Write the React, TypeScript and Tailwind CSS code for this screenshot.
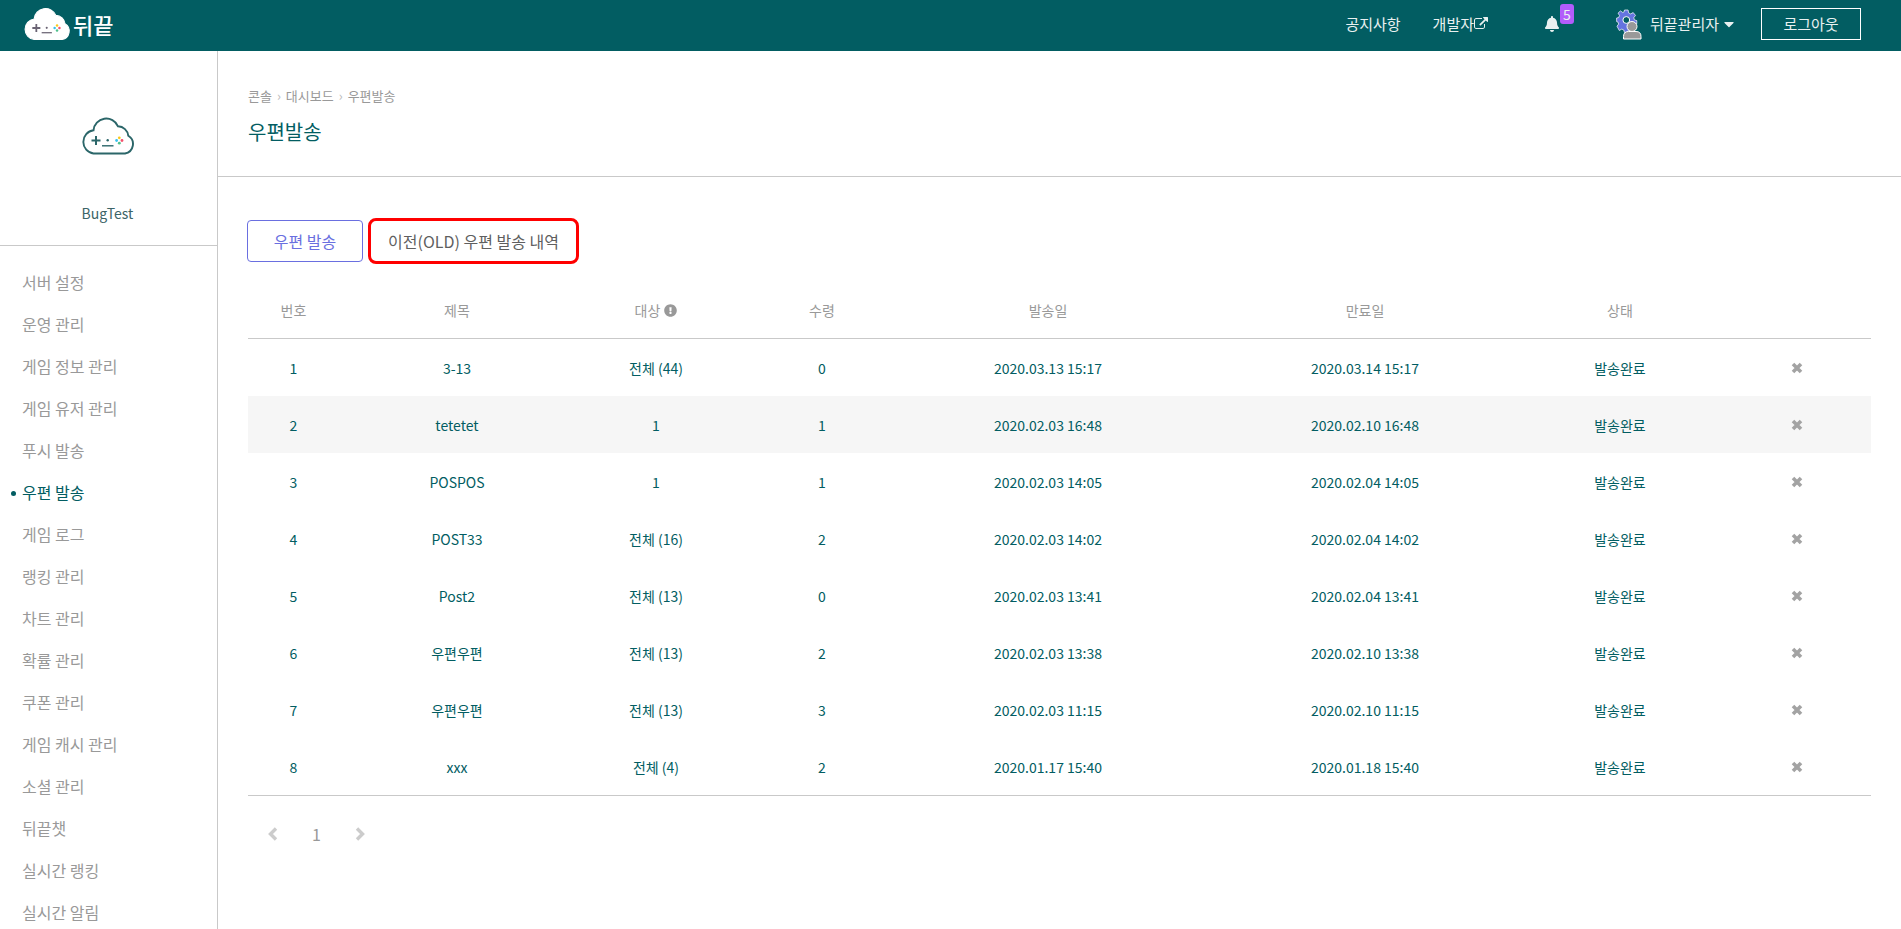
import { FaBell, FaCaretDown, FaExclamationCircle } from 'react-icons/fa'

const menu = [
  '서버 설정',
  '운영 관리',
  '게임 정보 관리',
  '게임 유저 관리',
  '푸시 발송',
  '우편 발송',
  '게임 로그',
  '랭킹 관리',
  '차트 관리',
  '확률 관리',
  '쿠폰 관리',
  '게임 캐시 관리',
  '소셜 관리',
  '뒤끝챗',
  '실시간 랭킹',
  '실시간 알림',
]

const posts = [
  { title: '3-13', target: '전체 (44)', received: 0, sent: '2020.03.13 15:17', expires: '2020.03.14 15:17' },
  { title: 'tetetet', target: '1', received: 1, sent: '2020.02.03 16:48', expires: '2020.02.10 16:48' },
  { title: 'POSPOS', target: '1', received: 1, sent: '2020.02.03 14:05', expires: '2020.02.04 14:05' },
  { title: 'POST33', target: '전체 (16)', received: 2, sent: '2020.02.03 14:02', expires: '2020.02.04 14:02' },
  { title: 'Post2', target: '전체 (13)', received: 0, sent: '2020.02.03 13:41', expires: '2020.02.04 13:41' },
  { title: '우편우편', target: '전체 (13)', received: 2, sent: '2020.02.03 13:38', expires: '2020.02.10 13:38' },
  { title: '우편우편', target: '전체 (13)', received: 3, sent: '2020.02.03 11:15', expires: '2020.02.10 11:15' },
  { title: 'xxx', target: '전체 (4)', received: 2, sent: '2020.01.17 15:40', expires: '2020.01.18 15:40' },
]

function CloudLogo({ className, outline }: { className: string; outline?: boolean }) {
  const face = outline ? '#2b6669' : '#6b6474'
  return (
    <svg viewBox="0 0 54 38" className={className} aria-hidden="true">
      <path
        d="M12.5 36.5A11.7 11.7 0 0 1 12.5 13.3A12.8 12.8 0 0 1 37 9.3A10.5 10.5 0 0 1 47.3 18.8A9.6 9.6 0 0 1 44 36.5Z"
        fill="#fff"
        stroke={outline ? '#2b6669' : '#fff'}
        strokeWidth={outline ? 1.9 : 1.2}
      />
      <path d="M10.5 23.5h9M15 19v9" stroke={face} strokeWidth="2" />
      <path d="M21 28.8h11.5" stroke={face} strokeWidth="1.4" />
      <circle cx="26.7" cy="23.3" r="1.2" fill={face} />
      <circle cx="38.3" cy="20.8" r="1.4" fill="#fbc91b" />
      <circle cx="41" cy="23.5" r="1.4" fill="#f4516c" />
      <circle cx="38.3" cy="26.2" r="1.4" fill="#4fc08d" />
      <circle cx="35.6" cy="23.5" r="1.4" fill="#35c3ee" />
    </svg>
  )
}

function AdminIcon() {
  return (
    <svg viewBox="0 0 26 32" className="w-[26px] h-8" aria-hidden="true">
      <path
        d="M8.5 2h3.6l.5 2.9 2 1L17.2 4.600l2.300 2.800-1.700 2.300.6 2.200 2.400.7v3.200l-2.400.7-.8 2.200 1.300 2.200-2.500 2.300-2.200-1.500-2 .8-.6 2H8.500l-.7-2.500-2-.9-2.500 1.400L1 18.200l1.700-2.200-.9-2.100L.6 13.600V10l2-.4.9-2.200L2 5.200l2.400-2.300 2.400 1.600 1.300-.6z"
        fill="#6574e0"
        stroke="#fff"
        strokeWidth=".7"
      />
      <circle cx="10.3" cy="12" r="3.400" fill="#025d62" stroke="#fff" />
      <path d="M7.500 31v-2.500q0-5 5-5h7.500q5 0 5 5V31z" fill="#999" stroke="#fff" />
      <circle cx="16" cy="18.500" r="5" fill="#999" stroke="#fff" />
    </svg>
  )
}

function ExternalIcon() {
  return (
    <svg viewBox="0 0 1792 1792" className="size-3.5" fill="currentColor" aria-hidden="true">
      <path d="M1408 928v320q0 119-84.5 203.5t-203.5 84.5h-832q-119 0-203.5-84.5t-84.5-203.5v-832q0-119 84.5-203.5t203.5-84.5h704q14 0 23 9t9 23v64q0 14-9 23t-23 9h-704q-66 0-113 47t-47 113v832q0 66 47 113t113 47h832q66 0 113-47t47-113v-320q0-14 9-23t23-9h64q14 0 23 9t9 23zm384-864v512q0 26-19 45t-45 19-45-19l-176-176-652 652q-10 10-23 10t-23-10l-114-114q-10-10-10-23t10-23l652-652-176-176q-19-19-19-45t19-45 45-19h512q26 0 45 19t19 45z" />
    </svg>
  )
}

function Header() {
  return (
    <header className="flex h-[51px] items-center justify-between bg-[#025d62] pb-[3px] pl-[23px] pr-10 text-[15px] text-[#e9f1f1]">
      <a href="#" className="flex items-center gap-0.5">
        <CloudLogo className="h-[34px] w-12" />
        <span className="text-[22px] font-medium leading-8 text-white">뒤끝</span>
      </a>
      <nav className="flex items-center">
        <a href="#">공지사항</a>
        <a href="#" className="ml-8 flex items-center">
          개발자
          <ExternalIcon />
        </a>
        <button type="button" aria-label="알림" className="relative ml-13 p-1">
          <FaBell className="size-4" />
          <span className="absolute -top-2 left-5 rounded-[3px] bg-[#b25cfb] px-[3px] text-sm leading-5">5</span>
        </button>
        <button type="button" className="ml-13 flex items-center gap-2">
          <AdminIcon />
          <span className="flex items-center gap-0.5">
            뒤끝관리자
            <FaCaretDown className="size-4" />
          </span>
        </button>
        <button type="button" className="ml-6 h-8 w-[100px] border border-white">
          로그아웃
        </button>
      </nav>
    </header>
  )
}

function Sidebar() {
  return (
    <aside className="w-[218px] shrink-0 border-r border-[#c9c9c9]">
      <div className="flex flex-col items-center border-b border-[#c9c9c9] pb-5 pr-0.5 pt-[66px]">
        <CloudLogo outline className="h-[38px] w-[54px]" />
        <p className="mt-[46px] text-sm leading-6 text-[#3c6467]">BugTest</p>
      </div>
      <ul className="pl-[22px] pt-[15px]">
        {menu.map((item) => (
          <li key={item} className="relative flex h-[42px] items-center">
            {item === '우편 발송' && (
              <span className="absolute -left-[11px] top-5 size-[5px] rounded-full bg-[#025d62]" />
            )}
            <a href="#" className={item === '우편 발송' ? 'text-[#025d62]' : 'text-[#999]'}>
              {item}
            </a>
          </li>
        ))}
      </ul>
    </aside>
  )
}

function PostTable() {
  return (
    <table className="w-full table-fixed border-separate border-spacing-0 border-b border-[#c9c9c9] text-center text-sm text-[#025d62]">
      <thead className="text-[#999] [&_th]:border-b [&_th]:border-[#c9c9c9]">
        <tr className="h-[57px]">
          <th className="w-[115px] pr-6 font-normal">번호</th>
          <th className="w-[188px] font-normal">제목</th>
          <th className="w-[210px] font-normal">
            <span className="inline-flex items-center gap-1">
              대상
              <FaExclamationCircle className="size-[13px]" />
            </span>
          </th>
          <th className="w-[122px] font-normal">수령</th>
          <th className="w-[330px] font-normal">발송일</th>
          <th className="w-[304px] font-normal">만료일</th>
          <th className="w-[206px] font-normal">상태</th>
          <th className="w-[148px]" aria-label="삭제" />
        </tr>
      </thead>
      <tbody>
        {posts.map((post, i) => (
          <tr key={i} className={i === 1 ? 'h-[57px] bg-[#f6f6f6]' : 'h-[57px]'}>
            <td className="pr-6">{i + 1}</td>
            <td>{post.title}</td>
            <td>{post.target}</td>
            <td>{post.received}</td>
            <td>{post.sent}</td>
            <td>{post.expires}</td>
            <td>발송완료</td>
            <td>
              <button type="button" aria-label="삭제" className="mx-auto block text-[#a3a3a3]">
                <svg viewBox="0 0 12 12" className="size-3" aria-hidden="true">
                  <path d="M2 2l8 8M10 2l-8 8" stroke="currentColor" strokeWidth="3.6" />
                </svg>
              </button>
            </td>
          </tr>
        ))}
      </tbody>
    </table>
  )
}

function Pagination() {
  return (
    <nav className="mt-[26px] flex items-center gap-8 pl-4 text-base text-[#999]">
      <button type="button" aria-label="이전" className="text-[#ccc]">
        <svg viewBox="0 0 16 16" className="size-4" aria-hidden="true">
          <path d="M12 2.500L6.500 8l5.500 5.500" fill="none" stroke="currentColor" strokeWidth="3.400" />
        </svg>
      </button>
      <a href="#">1</a>
      <button type="button" aria-label="다음" className="text-[#ccc]">
        <svg viewBox="0 0 16 16" className="size-4" aria-hidden="true">
          <path d="M4 2.500L9.500 8 4 13.500" fill="none" stroke="currentColor" strokeWidth="3.400" />
        </svg>
      </button>
    </nav>
  )
}

export default function App() {
  return (
    <div className="flex h-screen flex-col overflow-hidden bg-white font-['Noto_Sans_CJK_KR',sans-serif]">
      <Header />
      <div className="flex min-h-0 flex-1">
        <Sidebar />
        <main className="min-w-0 flex-1">
          <div className="h-[126px] border-b border-[#c9c9c9] pl-[30px] pt-[35px]">
            <div className="flex gap-[5px] text-[13px] leading-5 text-[#999]">
              <a href="#">콘솔</a>
              <span className="text-[#bbb]">›</span>
              <a href="#">대시보드</a>
              <span className="text-[#bbb]">›</span>
              <a href="#">우편발송</a>
            </div>
            <h1 className="mt-3 text-xl text-[#025d62]">우편발송</h1>
          </div>
          <div className="px-[30px] pt-[41px]">
            <div className="-ml-px mb-[18px] flex items-center gap-[5px]">
              <button type="button" className="h-[42px] w-[116px] rounded border border-[#6a6fe0] text-[#6a6fe0]">
                우편 발송
              </button>
              <button
                type="button"
                className="h-[46px] w-[211px] rounded-lg border-3 border-[#f00] text-[#5f5f5f]"
              >
                이전(OLD) 우편 발송 내역
              </button>
            </div>
            <PostTable />
            <Pagination />
          </div>
        </main>
      </div>
    </div>
  )
}
